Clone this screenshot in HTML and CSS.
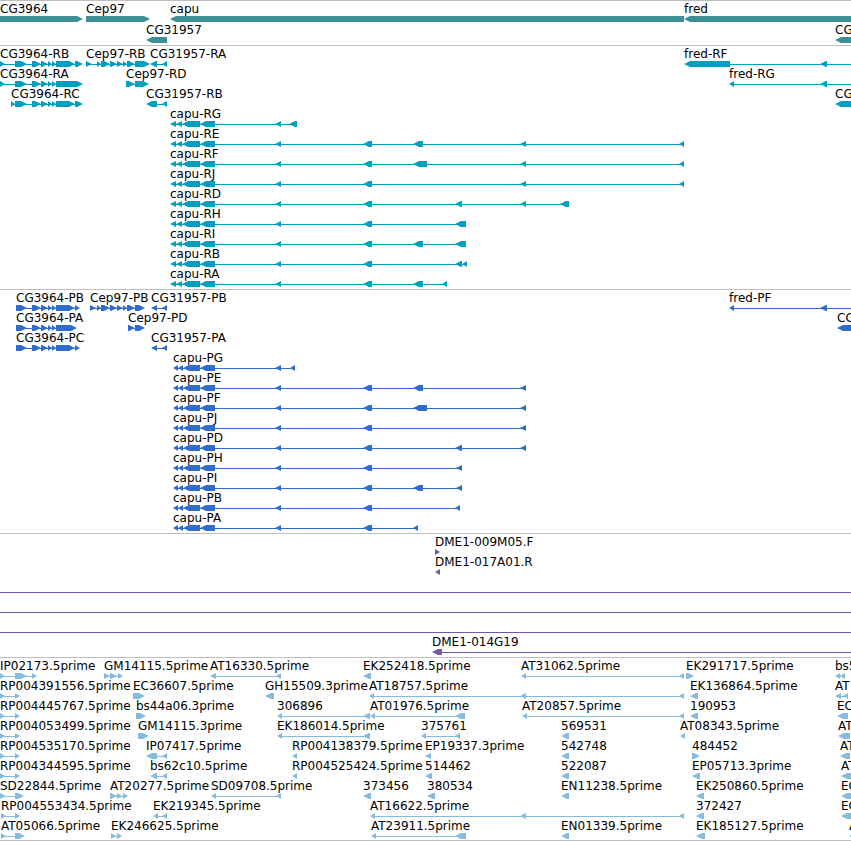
FILE: index.html
```html
<!DOCTYPE html>
<html lang="en">
<head>
  <meta charset="UTF-8">
  <meta name="viewport" content="width=device-width, initial-scale=1">
  <title>Genome Region</title>
  <link rel="stylesheet" href="styles.css">
</head>
<body>
  <main class="browser">
    <section class="track track-gene" id="genes" aria-label="Genes"></section>
    <section class="track track-transcript" id="transcripts" aria-label="Transcripts"></section>
    <section class="track track-protein" id="proteins" aria-label="Proteins"></section>
    <section class="track track-bac" id="bacs" aria-label="BACs"></section>
    <section class="track track-est" id="ests" aria-label="ESTs"></section>
  </main>
  <script src="tracks.js"></script>
</body>
</html>
```

FILE: styles.css
```css
html, body {
  margin: 0;
  padding: 0;
  background: #fff;
  color: #000;
}
body {
  font-family: "DejaVu Sans", sans-serif;
  font-size: 12px;
  line-height: 14px;
}

.browser {
  overflow: hidden;
  border-bottom: 1px solid #bebebe;
}

/* Tracks */
.track {
  display: flex;
  flex-direction: column;
  padding: 1px 0 2px;
  border-top: 1px solid #bebebe;
}
.track-gene       { color: #3d8f95; gap: 1px; }
.track-transcript { color: #009fbf; }
.track-protein    { color: #306ccc; }
.track-bac        { color: #7457a8; }
.track-est        { color: #87bbdd; padding-bottom: 1px; }

.row {
  position: relative;
  height: 20px;
}

/* Features sit at their own coordinate along the row */
.feature {
  position: absolute;
  top: 0;
  display: flex;
  flex-direction: column;
}
.label {
  height: 14px;
  color: #000;
  white-space: nowrap;
}
.glyph {
  display: block;
  height: 6px;
  fill: currentColor;
}
```

FILE: tracks.js
```js
(function(){
  var END = 4000; // features that run past the right edge of the region

  // feature: [label, strand, exons, end of the line (optional)]
  function f(label, strand, exons, end){
    return { label: label, strand: strand, exons: exons, end: end || exons[exons.length-1][1] };
  }

  // Exons shared by several transcripts
  var cgMid   = [[32,41],[41,48],[48,52],[52,56]];
  var cepMid  = [[97,101],[101,110],[110,117],[117,123],[123,127],[127,135]];
  var capuR   = [[170,176],[176,182],[182,200],[200,215],[275,281]];
  var capuP   = [[173,178],[178,183],[183,200],[200,215],[275,281]];
  var e363 = [363,372], e413 = [413,423], e413L = [413,427], e455 = [455,462], e520 = [520,526], e679 = [679,684];

  function capu(name, base, extra){ return [f('capu-'+name, -1, base.concat(extra))]; }

  var genes = [
    [f('CG3964',1,[[0,83]]), f('Cep97',1,[[86,150]]), f('capu',-1,[[170,684]]), f('fred',-1,[[684,END]])],
    [f('CG31957',-1,[[146,167]]), f('CG',-1,[[835,END]])]
  ];

  var transcripts = [
    [f('CG3964-RB',1,[[0,5],[15,27]].concat(cgMid,[[56,75],[75,83]])),
     f('Cep97-RB',1,[[86,92]].concat(cepMid,[[135,150]])),
     f('CG31957-RA',-1,[[150,157],[162,167]]),
     f('fred-RF',-1,[[684,730],[820,827]],END)],
    [f('CG3964-RA',1,[[0,5],[15,27]].concat(cgMid,[[56,83]])),
     f('Cep97-RD',1,[[126,135],[135,149]]),
     f('fred-RG',-1,[[729,734],[820,827]],END)],
    [f('CG3964-RC',1,[[11,15],[15,27]].concat(cgMid,[[56,75],[75,83]])),
     f('CG31957-RB',-1,[[146,157],[162,167]]),
     f('CG',-1,[[835,END]])],
    capu('RG',capuR,[[289,297]]),
    capu('RE',capuR,[e363,e413,e520,e679]),
    capu('RF',capuR,[e363,e413L,e520,e679]),
    capu('RJ',capuR,[e363,e520,e679]),
    capu('RD',capuR,[e363,e455,e520,[560,569]]),
    capu('RH',capuR,[e363,[455,466]]),
    capu('RI',capuR,[e363,e413,[455,466]]),
    capu('RB',capuR,[e363,e455,[462,467]]),
    capu('RA',capuR,[e363,e413,[442,447]])
  ];

  var proteins = [
    [f('CG3964-PB',1,[[16,27]].concat(cgMid,[[56,75],[75,80]])),
     f('Cep97-PB',1,[[90,96]].concat(cepMid,[[135,145]])),
     f('CG31957-PB',-1,[[151,157],[162,167]]),
     f('fred-PF',-1,[[729,734],[820,827]],END)],
    [f('CG3964-PA',1,[[16,27]].concat(cgMid,[[56,77]])),
     f('Cep97-PD',1,[[128,135],[135,145]]),
     f('CG',-1,[[837,END]])],
    [f('CG3964-PC',1,[[16,27]].concat(cgMid,[[56,75],[75,80]])),
     f('CG31957-PA',-1,[[151,157],[162,167]])],
    capu('PG',capuP,[[290,295]]),
    capu('PE',capuP,[e363,e413,e520]),
    capu('PF',capuP,[e363,e413L,e520]),
    capu('PJ',capuP,[e363,e520]),
    capu('PD',capuP,[e363,e455,e520]),
    capu('PH',capuP,[e363,[456,462]]),
    capu('PI',capuP,[e363,e413,[456,462]]),
    capu('PB',capuP,[e363,[455,460]]),
    capu('PA',capuP,[e363,[413,418]])
  ];

  var spanning = { label: '', strand: 1, exons: [], start: 0, end: END };
  var bacs = [
    [f('DME1-009M05.F',1,[[435,440]])],
    [f('DME1-017A01.R',-1,[[435,440]])],
    [spanning],
    [spanning],
    [spanning],
    [f('DME1-014G19',-1,[[432,442]],END)]
  ];

  var ests = [
    [f('IP02173.5prime',1,[[0,5],[15,27],[32,37]]),
     f('GM14115.5prime',1,[[104,110],[110,117],[118,123]]),
     f('AT16330.5prime',-1,[[210,216],[276,281]]),
     f('EK252418.5prime',-1,[[363,371]]),
     f('AT31062.5prime',-1,[[521,526],e679]),
     f('EK291717.5prime',1,[[686,694]]),
     f('bs5',-1,[[835,840],[840,845]])],
    [f('RP004391556.5prime',1,[[0,5],[15,20]]),
     f('EC36607.5prime',1,[[133,145]]),
     f('GH15509.3prime',-1,[[265,274]]),
     f('AT18757.5prime',-1,[[369,374],e520,e679]),
     f('EK136864.5prime',-1,[[690,698]]),
     f('AT',-1,[[835,841],[843,848]])],
    [f('RP004445767.5prime',1,[[0,5],[15,20]]),
     f('bs44a06.3prime',1,[[136,146]]),
     f('306896',-1,[[277,282],[363,370]]),
     f('AT01976.5prime',-1,[[370,375],[455,465]]),
     f('AT20857.5prime',-1,[[522,527],e679]),
     f('190953',-1,[[690,698]]),
     f('EC',-1,[[837,848]])],
    [f('RP004053499.5prime',1,[[0,5],[15,20]]),
     f('GM14115.3prime',1,[[138,149]]),
     f('EK186014.5prime',-1,[[277,282],[363,370]]),
     f('375761',-1,[[421,426],[455,460]]),
     f('569531',-1,[[561,569]]),
     f('AT08343.5prime',-1,[[680,685]]),
     f('AT',-1,[[838,850]])],
    [f('RP004535170.5prime',1,[[0,5],[15,20]]),
     f('IP07417.5prime',-1,[[146,157],[162,167]]),
     f('RP004138379.5prime',-1,[[292,297]]),
     f('EP19337.3prime',-1,[[425,431]]),
     f('542748',-1,[[561,569]]),
     f('484452',1,[[692,700]]),
     f('AT',-1,[[840,850]])],
    [f('RP004344595.5prime',1,[[0,5],[15,20]]),
     f('bs62c10.5prime',-1,[[150,157],[162,167]]),
     f('RP004525424.5prime',-1,[[292,297]]),
     f('514462',-1,[[425,432]]),
     f('522087',-1,[[561,569]]),
     f('EP05713.3prime',-1,[[692,700]]),
     f('AT',-1,[[841,860]])],
    [f('SD22844.5prime',1,[[0,6],[15,24]]),
     f('AT20277.5prime',1,[[110,117],[117,122],[123,128]]),
     f('SD09708.5prime',-1,[[211,216],[276,281]]),
     f('373456',-1,[[363,371]]),
     f('380534',-1,[[427,435]]),
     f('EN11238.5prime',-1,[[561,569]]),
     f('EK250860.5prime',-1,[[696,704]]),
     f('EC',-1,[[841,860]])],
    [f('RP004553434.5prime',1,[[1,6],[15,20]]),
     f('EK219345.5prime',-1,[[153,158],[162,167]]),
     f('AT16622.5prime',-1,[[370,375],e520,e679]),
     f('372427',-1,[[696,704]]),
     f('EC',-1,[[841,860]])],
    [f('AT05066.5prime',1,[[1,6],[15,25]]),
     f('EK246625.5prime',1,[[111,116],[117,122]]),
     f('AT23911.5prime',-1,[[371,376],[455,466]]),
     f('EN01339.5prime',-1,[[561,569]]),
     f('EK185127.5prime',-1,[[696,705]]),
     f('A',-1,[[849,860]])]
  ];

  // Exon box with a point in the direction of the strand
  function exonPath(s, e, strand){
    var head = Math.min(6, e - s);
    if(strand > 0){
      return 'M'+s+' 0H'+(e-head)+'L'+e+' 3L'+(e-head)+' 6H'+s+'Z';
    }
    return 'M'+e+' 0H'+(s+head)+'L'+s+' 3L'+(s+head)+' 6H'+e+'Z';
  }

  function drawFeature(feat){
    var exons = feat.exons;
    var start = exons.length ? exons[0][0] : feat.start;
    var width = feat.end - start;
    var paths = '';
    // joining line, only where there is something to join
    if(exons.length !== 1 || feat.end > exons[0][1]){
      var last = exons.length ? exons[exons.length-1] : null;
      var from = last && feat.strand > 0 ? 0 : (last ? 2 : 0);
      var to = last && last[1] === feat.end ? width-2 : width;
      paths += '<path d="M'+from+' 3H'+to+'V4H'+from+'Z"/>';
    }
    exons.forEach(function(x){
      paths += '<path d="'+exonPath(x[0]-start, x[1]-start, feat.strand)+'"/>';
    });
    var el = document.createElement('div');
    el.className = 'feature';
    el.style.left = start+'px';
    el.style.width = width+'px';
    el.innerHTML = '<span class="label">'+feat.label+'</span>' +
      '<svg class="glyph" width="'+width+'" height="6" aria-hidden="true">'+paths+'</svg>';
    return el;
  }

  function drawTrack(id, rows){
    var track = document.getElementById(id);
    rows.forEach(function(feats){
      var row = document.createElement('div');
      row.className = 'row';
      feats.forEach(function(feat){ row.appendChild(drawFeature(feat)); });
      track.appendChild(row);
    });
  }

  drawTrack('genes', genes);
  drawTrack('transcripts', transcripts);
  drawTrack('proteins', proteins);
  drawTrack('bacs', bacs);
  drawTrack('ests', ests);
})();
```
